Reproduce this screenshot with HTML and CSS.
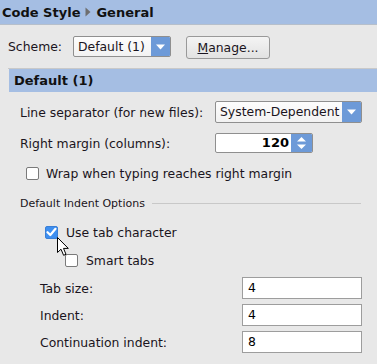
FILE: index.html
```html
<!DOCTYPE html>
<html>
<head>
<meta charset="utf-8">
<link rel="stylesheet" href="styles.css">
</head>
<body>
<div class="titlebar">
  <span class="crumb">Code Style</span>
  <svg class="crumb-arrow" width="6" height="10" viewBox="0 0 6 10"><path d="M0.5 0.5 L5.5 5 L0.5 9.5 Z" fill="#6e6e6e"/></svg>
  <span class="crumb">General</span>
</div>

<div class="scheme-row">
  <span class="label">Scheme:</span>
  <div class="combo combo-scheme">
    <span class="combo-text">Default (1)</span>
    <span class="combo-arrow"><svg width="9" height="6" viewBox="0 0 9 6"><path d="M0 0.5 H9 L4.5 5.5 Z" fill="#fff"/></svg></span>
  </div>
  <div class="button"><span class="mnemonic">M</span>anage...</div>
</div>

<div class="panel">
  <div class="panel-header">Default (1)</div>

  <div class="row row-sep">
    <span class="label">Line separator (for new files):</span>
    <div class="combo combo-sep">
      <span class="combo-text">System-Dependent</span>
      <span class="combo-arrow"><svg width="9" height="6" viewBox="0 0 9 6"><path d="M0 0.5 H9 L4.5 5.5 Z" fill="#fff"/></svg></span>
    </div>
  </div>

  <div class="row row-margin">
    <span class="label label-margin">Right margin (columns):</span>
    <div class="spinner">
      <span class="spinner-text">120</span>
      <span class="spinner-btns">
        <svg width="9" height="14" viewBox="0 0 9 14"><path d="M0 5.5 L4.5 1 L9 5.5 Z" fill="#fff"/><path d="M0 8.5 H9 L4.5 13 Z" fill="#fff"/></svg>
      </span>
    </div>
  </div>

  <div class="row row-wrap">
    <span class="check"></span>
    <span class="label">Wrap when typing reaches right margin</span>
  </div>

  <div class="group-title">
    <span>Default Indent Options</span>
    <span class="group-line"></span>
  </div>

  <div class="row row-usetab">
    <span class="check checked"><svg width="11" height="10" viewBox="0 0 11 10"><path d="M1.5 5.2 L4.3 8 L9.5 1.8" fill="none" stroke="#fff" stroke-width="2.2" stroke-linecap="round" stroke-linejoin="round"/></svg></span>
    <span class="label">Use tab character</span>
  </div>

  <div class="row row-smart">
    <span class="check"></span>
    <span class="label">Smart tabs</span>
  </div>

  <div class="fields">
    <div class="field-row"><span class="label">Tab size:</span><div class="textfield">4</div></div>
    <div class="field-row"><span class="label">Indent:</span><div class="textfield">4</div></div>
    <div class="field-row"><span class="label">Continuation indent:</span><div class="textfield">8</div></div>
  </div>
</div>

<svg class="cursor" width="13" height="20" viewBox="0 0 13 20"><path d="M0.5 0.5 L0.5 15.5 L4 12.2 L6.6 18.3 L9 17.3 L6.5 11.4 L11.3 11.4 Z" fill="#fff" stroke="#000" stroke-width="1" stroke-linejoin="miter"/></svg>
</body>
</html>
```

FILE: styles.css
```css
html, body {
  margin: 0;
  padding: 0;
}
body {
  width: 377px;
  height: 364px;
  overflow: hidden;
  background: #e8e8e8;
  font-family: "DejaVu Sans", Verdana, sans-serif;
  font-size: 12.4px;
  color: #1a1420;
  position: relative;
}
.titlebar {
  height: 24px;
  background: #a5bee3;
  border-bottom: 1px solid #b6bfcb;
  display: flex;
  align-items: center;
  padding-left: 2px;
  gap: 5px;
}
.crumb {
  font-weight: bold;
  font-size: 13px;
  color: #111;
}
.crumb-arrow {
  display: block;
}
.scheme-row {
  display: flex;
  align-items: flex-start;
  margin-top: 11px;
  padding-left: 8px;
  height: 23px;
}
.scheme-row .label {
  line-height: 21px;
  width: 65px;
}
.combo {
  height: 21px;
  box-sizing: border-box;
  border: 1px solid #8f8f8f;
  border-radius: 2px;
  background: linear-gradient(#fdfdfd, #f2f2f2);
  display: flex;
  align-items: stretch;
  overflow: hidden;
}
.combo-text {
  flex: 1;
  padding-left: 4px;
  line-height: 19px;
  white-space: nowrap;
}
.combo-arrow {
  width: 19px;
  background: #6d9ad8;
  display: flex;
  align-items: center;
  justify-content: center;
}
.combo-scheme {
  width: 98px;
}
.button {
  margin-left: 15px;
  width: 84px;
  height: 23px;
  box-sizing: border-box;
  border: 1px solid #999;
  border-radius: 3px;
  background: linear-gradient(#f4f4f4, #e2e2e2);
  text-align: center;
  line-height: 21px;
}
.mnemonic {
  text-decoration: underline;
}
.panel {
  margin-top: 9px;
  margin-left: 8px;
  border-top: 1px solid #c9c9c9;
}
.panel-header {
  height: 23px;
  margin-left: 1px;
  background: #a5bee3;
  font-weight: bold;
  font-size: 13px;
  color: #111;
  line-height: 23px;
  padding-left: 5px;
}
.row {
  display: flex;
  align-items: center;
  padding-left: 12px;
}
.row-sep {
  margin-top: 9px;
  height: 22px;
}
.row-sep .label {
  width: 195px;
}
.combo-sep {
  width: 147px;
  height: 22px;
}
.combo-sep .combo-text {
  line-height: 20px;
}
.row-margin {
  margin-top: 10px;
  height: 20px;
}
.label-margin {
  width: 195px;
}
.spinner {
  width: 98px;
  height: 20px;
  box-sizing: border-box;
  border: 1px solid #8f8f8f;
  border-radius: 2px;
  background: #fff;
  display: flex;
  overflow: hidden;
}
.spinner-text {
  flex: 1;
  text-align: right;
  font-weight: bold;
  font-size: 13px;
  padding-right: 2px;
  line-height: 18px;
  color: #000;
}
.spinner-btns {
  width: 21px;
  background: #6d9ad8;
  display: flex;
  align-items: center;
  justify-content: center;
}
.check {
  width: 13px;
  height: 13px;
  box-sizing: border-box;
  border: 1px solid #7a7a7a;
  border-radius: 2px;
  background: #fff;
  display: inline-flex;
  align-items: center;
  justify-content: center;
  flex: none;
}
.check.checked {
  background: #3e8ff0;
  border-color: #3a7fd6;
}
.row-wrap {
  margin-top: 10px;
  height: 20px;
  padding-left: 18px;
  gap: 7px;
}
.group-title {
  margin-top: 12px;
  height: 16px;
  padding-left: 12px;
  padding-right: 16px;
  display: flex;
  align-items: center;
  font-size: 11px;
}
.group-line {
  margin-left: 7px;
  flex: 1;
  height: 1px;
  background: #c8c8c8;
}
.row-usetab {
  margin-top: 14px;
  height: 14px;
  padding-left: 37px;
  gap: 8px;
}
.row-smart {
  margin-top: 14px;
  height: 14px;
  padding-left: 57px;
  gap: 8px;
}
.fields {
  margin-top: 10px;
  padding-left: 32px;
  display: flex;
  flex-direction: column;
  gap: 5px;
}
.field-row {
  display: flex;
  align-items: center;
  height: 22px;
}
.field-row .label {
  width: 202px;
}
.textfield {
  width: 120px;
  height: 22px;
  box-sizing: border-box;
  border: 1px solid #9d9d9d;
  background: #fff;
  padding-left: 5px;
  line-height: 20px;
  color: #000;
}
.cursor {
  position: absolute;
  left: 57px;
  top: 237px;
}
```
